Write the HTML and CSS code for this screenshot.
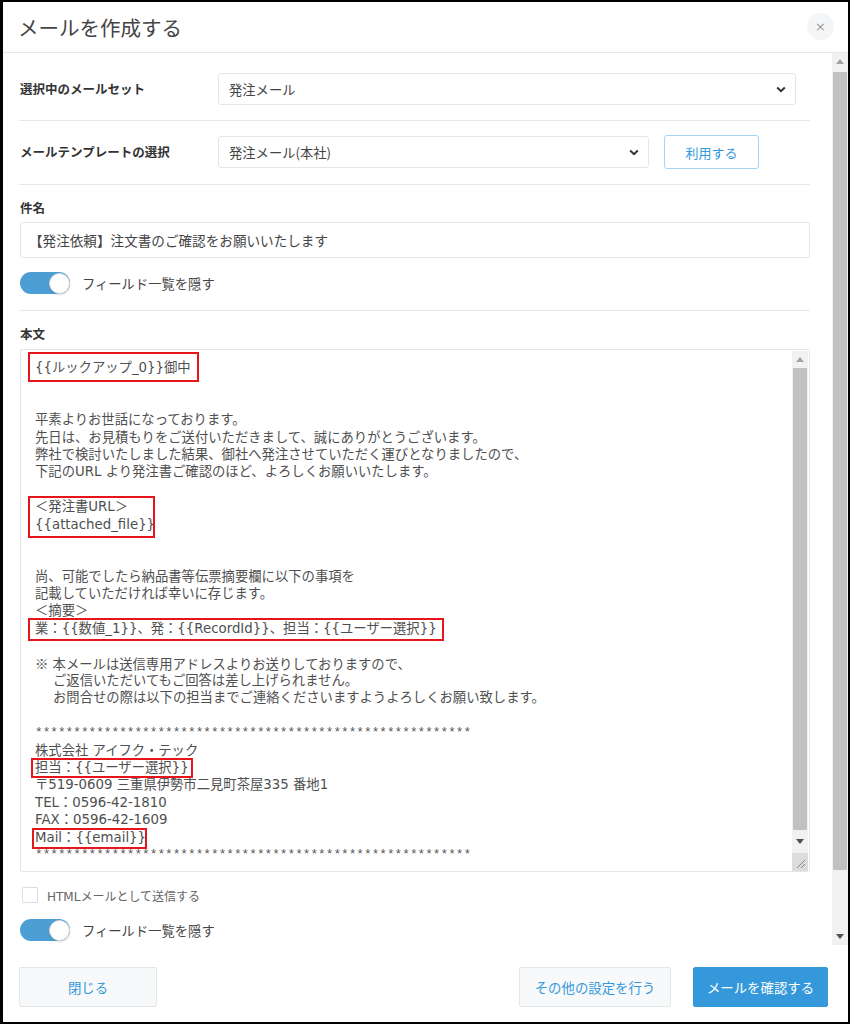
FILE: index.html
```html
<!DOCTYPE html>
<html lang="ja">
<head>
<meta charset="utf-8">
<title>メールを作成する</title>
<link rel="stylesheet" href="styles.css">
</head>
<body>
<div class="frame">
  <header class="header">
    <h1 class="title">メールを作成する</h1>
    <button class="close" type="button">×</button>
  </header>

  <div class="main">
    <div class="content">
      <div class="form-row">
        <label class="label">選択中のメールセット</label>
        <div class="select">
          <span>発注メール</span>
          <svg class="chev" width="10" height="7" viewBox="0 0 10 7"><polyline points="1.2,1.5 5,5.2 8.8,1.5" fill="none" stroke="#333" stroke-width="2"/></svg>
        </div>
      </div>

      <div class="form-row row2">
        <label class="label">メールテンプレートの選択</label>
        <div class="row2-ctrl">
          <div class="select select-short">
            <span>発注メール(本社)</span>
            <svg class="chev" width="10" height="7" viewBox="0 0 10 7"><polyline points="1.2,1.5 5,5.2 8.8,1.5" fill="none" stroke="#333" stroke-width="2"/></svg>
          </div>
          <button class="btn-outline" type="button">利用する</button>
        </div>
      </div>

      <section class="section subject">
        <div class="label">件名</div>
        <div class="input">【発注依頼】注文書のご確認をお願いいたします</div>
        <div class="toggle-row">
          <span class="toggle"><span class="knob"></span></span>
          <span class="toggle-text">フィールド一覧を隠す</span>
        </div>
      </section>

      <section class="section body-sec">
        <div class="label">本文</div>
        <div class="textarea">
          <div class="body-text">
            <div class="ln"><span class="mark m1">{{ルックアップ_0}}御中</span></div>
            <div class="ln"></div>
            <div class="ln"></div>
            <div class="ln">平素よりお世話になっております。</div>
            <div class="ln">先日は、お見積もりをご送付いただきまして、誠にありがとうございます。</div>
            <div class="ln">弊社で検討いたしました結果、御社へ発注させていただく運びとなりましたので、</div>
            <div class="ln">下記のURL より発注書ご確認のほど、よろしくお願いいたします。</div>
            <div class="ln"></div>
            <div class="mark mark-block m2">
              <div class="ln">＜発注書URL＞</div>
              <div class="ln">{{attached_file}}</div>
            </div>
            <div class="ln"></div>
            <div class="ln"></div>
            <div class="ln">尚、可能でしたら納品書等伝票摘要欄に以下の事項を</div>
            <div class="ln">記載していただければ幸いに存じます。</div>
            <div class="ln">＜摘要＞</div>
            <div class="ln"><span class="mark m3">業：{{数値_1}}、発：{{RecordId}}、担当：{{ユーザー選択}}</span></div>
            <div class="ln"></div>
            <div class="ln"><span class="cjk">※</span> 本メールは送信専用アドレスよりお送りしておりますので、</div>
            <div class="ln ind">ご返信いただいてもご回答は差し上げられません。</div>
            <div class="ln ind">お問合せの際は以下の担当までご連絡くださいますようよろしくお願い致します。</div>
            <div class="ln"></div>
            <div class="ln stars">*********************************************************</div>
            <div class="ln">株式会社 アイフク・テック</div>
            <div class="ln"><span class="mark m4">担当：{{ユーザー選択}}</span></div>
            <div class="ln">〒519-0609 三重県伊勢市二見町茶屋335 番地1</div>
            <div class="ln">TEL：0596-42-1810</div>
            <div class="ln">FAX：0596-42-1609</div>
            <div class="ln"><span class="mark m5">Mail：{{email}}</span></div>
            <div class="ln stars">*********************************************************</div>
          </div>
          <div class="sbar inner-sbar">
            <div class="arrow up"><svg width="8" height="5" viewBox="0 0 8 5"><polygon points="0,5 8,5 4,0" fill="#a3a3a3"/></svg></div>
            <div class="track"><div class="thumb"></div></div>
            <div class="arrow down"><svg width="8" height="5" viewBox="0 0 8 5"><polygon points="0,0 8,0 4,5" fill="#505050"/></svg></div>
            <div class="grip"><svg width="12" height="12" viewBox="0 0 12 12"><line x1="3" y1="11" x2="11" y2="3" stroke="#8a8a8a" stroke-width="1"/><line x1="7" y1="11" x2="11" y2="7" stroke="#8a8a8a" stroke-width="1"/></svg></div>
          </div>
        </div>

        <div class="check-row">
          <span class="checkbox"></span>
          <span class="check-text">HTMLメールとして送信する</span>
        </div>
        <div class="toggle-row toggle-row2">
          <span class="toggle"><span class="knob"></span></span>
          <span class="toggle-text">フィールド一覧を隠す</span>
        </div>
      </section>
    </div>

    <div class="sbar outer-sbar">
      <div class="arrow up"><svg width="8" height="5" viewBox="0 0 8 5"><polygon points="0,5 8,5 4,0" fill="#a3a3a3"/></svg></div>
      <div class="track"><div class="thumb"></div></div>
      <div class="arrow down"><svg width="8" height="5" viewBox="0 0 8 5"><polygon points="0,0 8,0 4,5" fill="#505050"/></svg></div>
    </div>
  </div>

  <footer class="footer">
    <button class="btn btn-light btn-close" type="button">閉じる</button>
    <div class="footer-right">
      <button class="btn btn-light btn-other" type="button">その他の設定を行う</button>
      <button class="btn btn-primary" type="button">メールを確認する</button>
    </div>
  </footer>
</div>
</body>
</html>
```

FILE: styles.css
```css
* { box-sizing: border-box; }

html, body {
  margin: 0;
  padding: 0;
  background: #fff;
}

body {
  font-family: "Noto Sans CJK JP", "Noto Sans", sans-serif;
  color: #333;
}

.frame {
  width: 850px;
  height: 1024px;
  border: 2px solid #000;
  border-left-width: 3px;
  background: #fff;
  display: flex;
  flex-direction: column;
}

/* header */
.header {
  height: 51px;
  flex: none;
  display: flex;
  align-items: center;
  justify-content: space-between;
  padding: 0 14px 0 15px;
  border-bottom: 1px solid #e6e9ea;
}
.title {
  margin: 0;
  font-size: 20.5px;
  font-weight: 400;
  line-height: 26px;
  color: #444;
}
.close {
  width: 27px;
  height: 27px;
  border-radius: 50%;
  border: none;
  background: #f3f5f6;
  color: #9a9a9a;
  font-size: 13px;
  line-height: 27px;
  padding: 0;
  font-family: "DejaVu Sans", sans-serif;
  margin-bottom: 1px;
}

/* main */
.main {
  height: 892px;
  flex: none;
  display: flex;
}
.content {
  flex: 1;
  padding: 0 22px 0 16px;
  overflow: hidden;
}

.label {
  font-size: 12.5px;
  font-weight: 700;
  line-height: 18px;
  color: #333;
}

.form-row {
  display: grid;
  grid-template-columns: 198px 1fr;
  align-items: center;
  padding: 20px 14px 15px 1px;
  border-bottom: 1px solid #e6e9ea;
}
.row2 {
  padding: 14px 0 15px 1px;
}
.row2-ctrl {
  display: flex;
  align-items: center;
  gap: 15px;
}

.select {
  height: 32px;
  border: 1px solid #e3e7e8;
  border-radius: 3px;
  background: #fff;
  display: flex;
  align-items: center;
  justify-content: space-between;
  padding: 0 9px 0 10px;
  font-size: 13.3px;
  color: #444;
}
.select-short {
  width: 431px;
}
.chev { display: block; }

.btn-outline {
  width: 95px;
  height: 34px;
  border: 1px solid #a9d3ee;
  border-radius: 3px;
  background: #fff;
  color: #3498db;
  font-family: inherit;
  font-size: 13px;
  padding: 0;
}

.section {
  padding-left: 1px;
}
.subject {
  padding-top: 14px;
  padding-bottom: 16px;
  border-bottom: 1px solid #e6e9ea;
}
.input {
  margin-top: 5px;
  height: 36px;
  border: 1px solid #e3e7e8;
  border-radius: 3px;
  display: flex;
  align-items: center;
  padding-left: 8px;
  font-size: 13.6px;
  color: #444;
}

.toggle-row {
  margin-top: 14px;
  height: 22px;
  display: flex;
  align-items: center;
}
.toggle {
  width: 50px;
  height: 22px;
  border-radius: 11px;
  background: #4b9fd5;
  display: flex;
  align-items: center;
  justify-content: flex-end;
}
.knob {
  width: 21px;
  height: 21px;
  border-radius: 50%;
  background: #fff;
  border: 1px solid #d6dadc;
  box-shadow: 0 1px 2px rgba(0,0,0,0.15);
}
.toggle-text {
  margin-left: 12px;
  font-size: 13.3px;
  color: #444;
}

.body-sec {
  padding-top: 14px;
}
.textarea {
  margin-top: 6px;
  height: 523px;
  border: 1px solid #e3e7e8;
  border-radius: 2px;
  display: flex;
  overflow: hidden;
}
.body-text {
  flex: 1;
  padding: 9px 0 0 14px;
  font-family: "DejaVu Sans", "Noto Sans CJK JP", sans-serif;
  font-size: 13.33px;
  color: #4f4f4f;
  overflow: hidden;
}
.cjk {
  font-family: "Noto Sans CJK JP", sans-serif;
}
.ln {
  height: 17.4px;
  line-height: 17.4px;
  white-space: pre;
}
.ind { padding-left: 18px; }
.stars {
  font-family: "Liberation Mono", monospace;
  font-size: 12.75px;
  color: #555;
}

.mark {
  position: relative;
  display: inline-block;
}
.mark-block {
  display: block;
  width: fit-content;
}
.mark::after {
  content: "";
  position: absolute;
  border: 2px solid #e8141b;
}
.m1::after { top: -7px; bottom: -6px; left: -7px; right: -8px; }
.m2::after { top: -2px; bottom: -5px; left: -7px; right: 0; }
.m3::after { top: -2px; bottom: -4px; left: -7px; right: -7px; }
.m4::after { top: -1px; bottom: -2px; left: -4px; right: -4px; }
.m5::after { top: -1px; bottom: -3px; left: -3px; right: -1px; }

/* scrollbars */
.sbar {
  width: 16px;
  flex: none;
  display: flex;
  flex-direction: column;
  background: #f1f1f1;
}
.arrow {
  height: 17px;
  display: flex;
  align-items: center;
  justify-content: center;
  flex: none;
}
.track {
  flex: 1;
  display: flex;
  flex-direction: column;
}
.thumb {
  background: #c1c1c1;
  margin: 0 1px;
}
.inner-sbar {
  margin: 1px 1px 0 0;
}
.inner-sbar .thumb { flex: 1; }
.inner-sbar .arrow.down { height: 23px; }
.grip {
  height: 18px;
  background: #dcdcdc;
  display: flex;
  align-items: flex-end;
  justify-content: flex-end;
  padding: 0 2px 2px 0;
}
.outer-sbar .track { padding: 2px 0 58px; }
.outer-sbar .thumb { flex: 1; }

/* footer */
.footer {
  flex: 1;
  display: flex;
  justify-content: space-between;
  align-items: flex-start;
  padding: 22px 20px 0 16px;
}
.footer-right {
  display: flex;
  gap: 22px;
}
.btn {
  height: 40px;
  border-radius: 2px;
  font-family: inherit;
  font-size: 13.4px;
  padding: 0;
}
.btn-light {
  background: #f7f9fa;
  border: 1px solid #e3e7e8;
  color: #3498db;
}
.btn-close { width: 138px; }
.btn-other { width: 152px; }
.btn-primary {
  width: 135px;
  background: #3498db;
  border: 1px solid #3498db;
  color: #fff;
}

/* checkbox */
.check-row {
  margin-top: 15px;
  height: 16px;
  display: flex;
  align-items: center;
  padding-left: 2px;
}
.checkbox {
  width: 16px;
  height: 16px;
  border: 1px solid #d9dee0;
  border-radius: 1px;
  background: #fff;
}
.check-text {
  margin-left: 9px;
  font-family: "DejaVu Sans", "Noto Sans CJK JP", sans-serif;
  font-size: 12px;
  color: #666;
}
.toggle-row2 {
  margin-top: 16px;
}
```
